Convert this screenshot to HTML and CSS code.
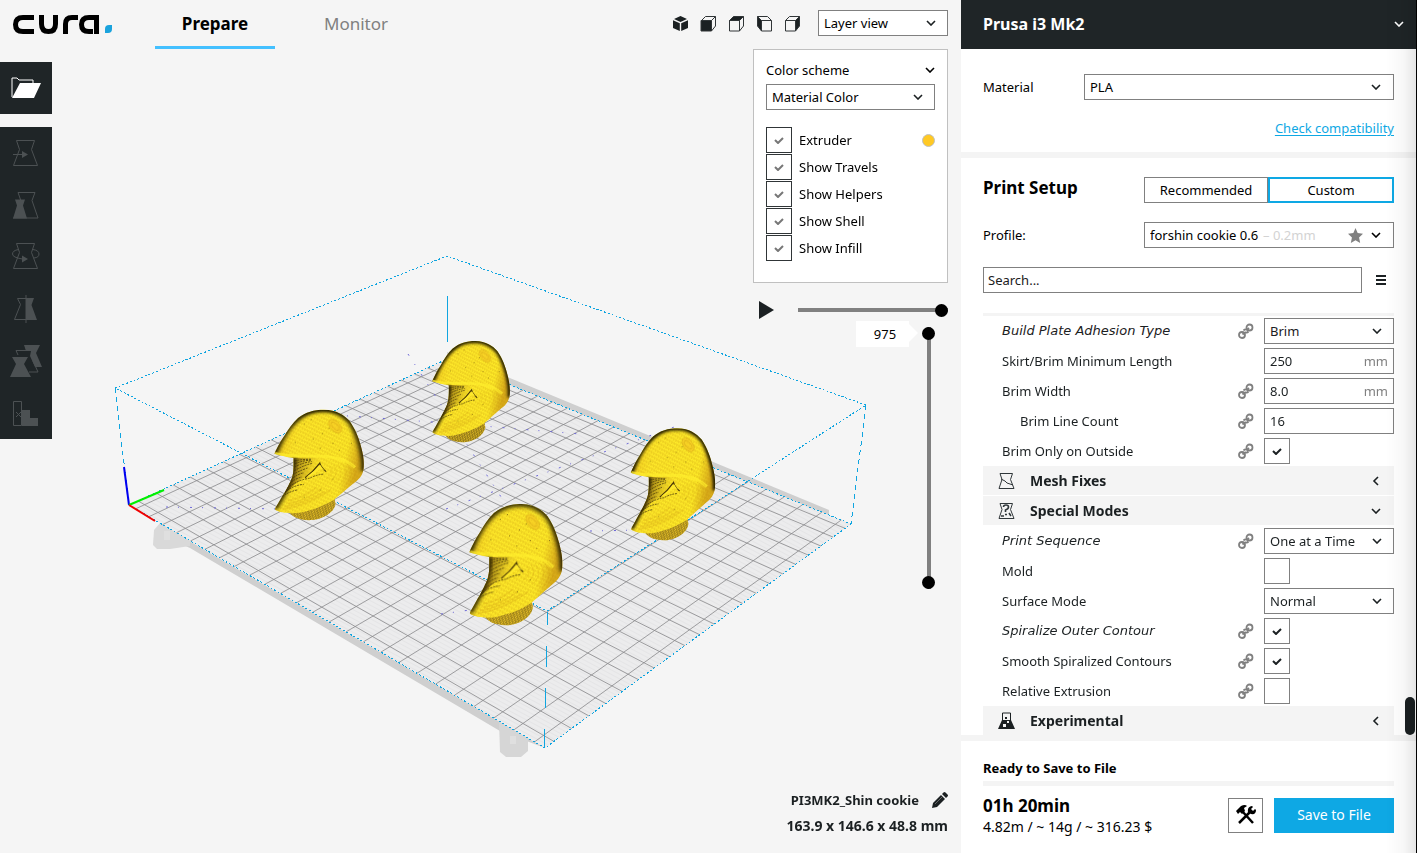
FILE: index.html
```html
<!DOCTYPE html>
<html lang="en">
<head>
    <meta charset="UTF-8">
    <meta name="viewport" content="width=device-width, initial-scale=1.0">
    <title>Cura</title>
    <link rel="stylesheet" href="styles.css">
</head>
<body>
    <!-- Shared icons -->
    <svg class="sprite" aria-hidden="true">
        <symbol id="link" viewBox="0 0 16 16">
            <g fill="none" stroke="#808080" stroke-width="1.800">
                <circle cx="4" cy="12" r="3"/>
                <circle cx="11.500" cy="4.500" r="3"/>
                <path d="M4.500 11.500l2-2M9 7l2-2M5.500 7.500q2-2 3.500-.5M7 9q1.500 1.500 3.500-.5"/>
            </g>
        </symbol>
        <symbol id="down" viewBox="0 0 10 6"><path d="M1 1l4 4 4-4" fill="none" stroke="currentColor" stroke-width="1.600"/></symbol>
        <symbol id="left" viewBox="0 0 6 10"><path d="M5 1l-4 4 4 4" fill="none" stroke="currentColor" stroke-width="1.600"/></symbol>
    </svg>

    <main class="viewport">
        <svg class="scene" viewBox="0 0 961 853" preserveAspectRatio="xMinYMin meet">
            <defs>
                <linearGradient id="skin" x1="0" y1="0" x2="1" y2="0.250">
                    <stop offset="0" stop-color="#f0c81e"/>
                    <stop offset="0.300" stop-color="#ffea2a"/>
                    <stop offset="0.850" stop-color="#ffec28"/>
                    <stop offset="1" stop-color="#d8ac1a"/>
                </linearGradient>
                <linearGradient id="hollow" x1="0" y1="0" x2="1" y2="0.200">
                    <stop offset="0" stop-color="#2e2404"/>
                    <stop offset="0.300" stop-color="#8a6c10" stop-opacity="0.850"/>
                    <stop offset="1" stop-color="#ffdf28" stop-opacity="0"/>
                </linearGradient>
                <pattern id="layers" width="12" height="9" patternUnits="userSpaceOnUse" patternTransform="rotate(-62)">
                    <path d="M0 2h9M3 6.500h8" stroke="#c08a08" stroke-width="2.500" opacity="0.400"/>
                </pattern>
                <pattern id="rings" width="9" height="7" patternUnits="userSpaceOnUse" patternTransform="rotate(-14)">
                    <path d="M0 2h6M3 5h6" stroke="#33290a" stroke-width="2"/>
                </pattern>
                <pattern id="mesh" width="4" height="4" patternUnits="userSpaceOnUse" patternTransform="rotate(28)">
                    <path d="M0 0h4" stroke="#dedee0" stroke-width="1"/>
                </pattern>
                <filter id="soft" x="-20%" y="-20%" width="140%" height="140%"><feGaussianBlur stdDeviation="6"/></filter>
                <path id="outline" d="M148 217C160 190 168 176 180 157C192 136 205 115 222 99C246 80 272 72 303 72C342 73 366 89 383 109C402 137 412 165 420 198C426 222 429 241 427 266C424 289 413 302 398 313C378 330 355 352 333 370C300 390 262 405 225 412C200 415 165 413 150 402C149 396 154 391 160 380C174 354 188 332 198 309C207 291 209 274 208 231C185 228 164 222 148 217Z"/>
                <clipPath id="inside"><use href="#outline"/></clipPath>
                <g id="cookie">
                    <path d="M190 402C200 425 225 437 262 436C300 434 336 410 339 382L335 360Z" fill="#e9c126"/>
                    <path d="M190 402C200 425 225 437 262 436C300 434 336 410 339 382L335 360Z" fill="url(#rings)" opacity="0.800"/>
                    <use href="#outline" fill="url(#skin)"/>
                    <g clip-path="url(#inside)">
                        <use href="#outline" fill="url(#layers)"/>
                        <path d="M203 231C240 231 275 228 300 231C290 240 282 250 270 270C250 295 225 300 180 350Z" fill="url(#hollow)"/>
                        <path d="M148 217C165 175 185 130 222 99C246 78 272 70 303 70C342 71 366 87 385 109C412 150 432 220 428 275" fill="none" stroke="#241b02" stroke-width="18" filter="url(#soft)"/>
                        <path d="M207 232C207 290 188 330 148 398" fill="none" stroke="#2b2104" stroke-width="18" filter="url(#soft)"/>
                        <path d="M150 216C185 229 260 222 310 226Q370 232 400 262" fill="none" stroke="#ffee2c" stroke-width="10" opacity="0.700"/>
                        <g fill="none" stroke="#40320a" stroke-width="3" stroke-dasharray="6 3" opacity="0.850">
                            <path d="M212 240q25-5 54-5M212 250q28-12 50-11M211 261q28-16 54-18M210 273q34-20 56-24M205 286q32-18 48-22"/>
                            <path d="M200 302q20-18 40-22M193 316q22-18 40-22M188 330q36-28 70-32q20-12 46-14M180 344q30-24 60-26M172 358q26-18 50-22"/>
                        </g>
                        <path d="M244 296q26-20 46-48q4 16 20 28" fill="none" stroke="#4a3808" stroke-width="4"/>
                        <path d="M248 294q24-18 44-40q4 10 14 18q-12-10-22 0q-14 16-36 22z" fill="#ffe92c"/>
                        <g fill="none" stroke="#c78f12" stroke-width="2" opacity="0.600">
                            <ellipse cx="338" cy="126" rx="15" ry="26" transform="rotate(-40 338 126)" fill="#f5c624"/>
                            <ellipse cx="338" cy="126" rx="8" ry="17" transform="rotate(-40 338 126)"/>
                            <path d="M322 260q14 22-12 40M334 256q18 28-10 50M346 252q24 32-10 62M358 248q30 36-8 72M370 246q36 36-2 76M382 246q36 34 0 66" stroke-dasharray="4 2"/>
                            <path d="M175 400q75-10 150-65M180 392q60-10 125-50M190 382q60-10 105-50M190 372q50-10 90-45"/>
                        </g>
                        <path d="M240 118h2M262 104h2M298 150h2M330 182h2M268 168h2M212 180h2M350 205h2M388 182h2M330 300h2M292 336h2M240 360h2M318 132h2M290 198h2" stroke="#5c470a" stroke-width="3"/>
                    </g>
                </g>
            </defs>

            <!-- Printer frame under the plate -->
            <g fill="#cfcfcf">
                <path d="M160 524L545 748L500 731L190 548L160 535Z"/>
                <path d="M447 352L829 510V515L824 518L447 366Z"/>
                <path d="M154 530L160 523H172L190 540V546L170 549H157L153 545Z" fill="#d9d9d9"/>
                <path d="M499 722L528 738V751L521 757H506L500 752Z" fill="#d6d6d6"/>
            </g>
            <path d="M164 531h6v9h-6zM510 736h6v8h-6z" fill="#dfdfdf"/>

            <path d="M129 505L545 748L851 524L447 359Z" fill="#ececed"/>
            <path d="M129 505L545 748L851 524L447 359Z" fill="url(#mesh)"/>
            <g id="grid" class="grid"></g>

            <g class="volume">
                <path d="M129 505L545 748L851 524L447 359Z" stroke-dasharray="2 2"/>
                <path d="M115 388L447 256L866 405L547 611Z" stroke-dasharray="2 2"/>
                <path d="M115 388L129 505M866 405L851 524" stroke-dasharray="5 4"/>
                <path d="M547 612V625M546 646V667M545 688V708M544 729V748M447 296V342"/>
            </g>
            <g class="travel">
                <path d="M408 354L505 503" stroke-dasharray="1 4"/>
                <path d="M335 415L446 423L580 434"/>
                <path d="M446 509L525 480L680 425"/>
                <path d="M166 507L280 509M441 614L470 610M590 531L640 530" stroke-dasharray="4 33"/>
            </g>
            <g fill="none" stroke-width="2">
                <path d="M129 505L124 467" stroke="#0000f0"/>
                <path d="M129 505L164 490" stroke="#00f000"/>
                <path d="M129 505L155 521" stroke="#f00000"/>
            </g>

            <use href="#cookie" transform="translate(391 321) scale(0.278)"/>
            <use href="#cookie" transform="translate(227 388) scale(0.320 0.303)"/>
            <use href="#cookie" transform="translate(586 406) scale(0.302 0.308)"/>
            <use href="#cookie" transform="translate(420 480) scale(0.333)"/>
        </svg>

        <header class="topbar">
            <svg class="logo" viewBox="0 0 100 22" role="img" aria-label="cura">
                <g fill="none" stroke="#000" stroke-width="5">
                    <path d="M21 3.500H10Q2.500 3.500 2.500 10.500T10 17.500H21"/>
                    <path d="M28.500 1V10Q28.500 17.500 35.500 17.500T42.500 10V1"/>
                    <path d="M52.500 20V10Q52.500 3.500 59 3.500H65"/>
                    <path d="M83.500 20V3.500H76Q68.500 3.500 68.500 10.500T76 17.500H80"/>
                </g>
                <path d="M92 19V15Q92 11 96 11H99V15Q99 19 95 19Z" fill="#1aa3dd"/>
            </svg>
            <nav class="tabs">
                <a href="#prepare" class="tab active">Prepare</a>
                <a href="#monitor" class="tab">Monitor</a>
            </nav>
            <div class="views">
                <button aria-label="3D view">
                    <svg viewBox="0 0 17 17"><path d="M8.500 1L15 4 8.500 7 2 4zM1 5.300l6.800 3V16L1 13zM16 5.300l-6.800 3V16L16 13z" fill="#1b2022"/></svg>
                </button>
                <button aria-label="Front view">
                    <svg viewBox="0 0 17 17" fill="none" stroke="#303537"><path d="M1.500 5.500l4-4h10v9.500l-4 5M11.500 5.500l4-4"/><path d="M1 5.500h10.500V16H1z" fill="#1b2022"/></svg>
                </button>
                <button aria-label="Top view">
                    <svg viewBox="0 0 17 17" fill="none" stroke="#303537"><path d="M1.500 5.500h10V16h-10zM11.500 16l4-5V1.500"/><path d="M1.500 5.500l4-4h10l-4 4z" fill="#1b2022"/></svg>
                </button>
                <button aria-label="Left view">
                    <svg viewBox="0 0 17 17" fill="none" stroke="#303537"><path d="M5.500 5.500h10V16h-10zM1.500 1.500h10l4 4"/><path d="M1.500 1.500l4 4V16l-4-5z" fill="#1b2022"/></svg>
                </button>
                <button aria-label="Right view">
                    <svg viewBox="0 0 17 17" fill="none" stroke="#303537"><path d="M1.500 5.500h10V16h-10zM1.500 5.500l4-4h10"/><path d="M11.500 5.500l4-4V11l-4 5z" fill="#1b2022"/></svg>
                </button>
            </div>
            <select class="combo view-mode" aria-label="View mode"><option>Layer view</option></select>
        </header>

        <div class="workspace">
            <div class="toolbar">
                <button class="open" aria-label="Open file">
                    <svg viewBox="0 0 30 22"><path d="M1 20V1h5l2 2h14v4" fill="none" stroke="#fff"/><path d="M9 6h21l-7 15H1z" fill="#fff"/></svg>
                </button>
                <div class="tools">
                    <button aria-label="Move">
                        <svg viewBox="0 0 30 30"><path d="M5.500 2.500h18l-3 9 6 16h-24l6-16zM2 16.500h9" class="line"/><path d="M11 13l6 3.500-6 3.500z"/></svg>
                    </button>
                    <button aria-label="Scale">
                        <svg viewBox="0 0 30 30"><path d="M10 11l-3-8.500h17l-3 8 6 17.500H2" class="line"/><path d="M4 9.500h10l-2 6 4 13H2l4-13z"/></svg>
                    </button>
                    <button aria-label="Rotate">
                        <svg viewBox="0 0 30 30"><path d="M5.500 1.500h18l-3 9 6 16h-24l6-16zM7.500 7.500q-6 1-6 4.500t10 5M22 7.500q6 1 6 4.500t-5 4" class="line"/><path d="M11 13.500l6 3.500-6 3.500z"/></svg>
                    </button>
                    <button aria-label="Mirror">
                        <svg viewBox="0 0 30 30"><path d="M15 4.500H6.500l3 6-6 15H15M15 1v28" class="line"/><path d="M15 4h8l-2.500 7L26 26H15z"/></svg>
                    </button>
                    <button class="wide" aria-label="Per model settings">
                        <svg viewBox="0 0 34 34"><path d="M9 11l-2-4.500h15M24 17l5 11h-9" class="line"/><path d="M15 1h16l-4 8 6 14h-7l-5-11 1-5h-5zM3 13h16l-4 7 7 13H1l6-13z"/></svg>
                    </button>
                    <button aria-label="Support blocker">
                        <svg viewBox="0 0 30 30"><path d="M2.500 3.500h8v24h-8z" class="line"/><path d="M5 14l5 5M10 14l-5 5" class="line"/><path d="M11 12h8v8h8v8H11z"/></svg>
                    </button>
                </div>
            </div>

            <div class="side">
                <section class="layer-panel">
                    <div class="panel-title">Color scheme <svg class="chevron"><use href="#down"/></svg></div>
                    <select class="combo" aria-label="Color scheme"><option>Material Color</option></select>
                    <div class="checks">
                        <label><input type="checkbox" class="check pale" checked>Extruder<i class="swatch"></i></label>
                        <label><input type="checkbox" class="check pale" checked>Show Travels</label>
                        <label><input type="checkbox" class="check pale" checked>Show Helpers</label>
                        <label><input type="checkbox" class="check pale" checked>Show Shell</label>
                        <label><input type="checkbox" class="check pale" checked>Show Infill</label>
                    </div>
                </section>
                <div class="playback">
                    <button aria-label="Play"><svg viewBox="0 0 15 18"><path d="M0 0l15 9-15 9z" fill="#1b2022"/></svg></button>
                    <input type="range" class="slider" aria-label="Path" value="100">
                </div>
                <div class="layers">
                    <output class="layer-tag" for="layer-top">975</output>
                    <div class="layer-range">
                        <input type="range" class="slider vertical" id="layer-top" aria-label="Top layer" max="975" value="975">
                        <input type="range" class="slider vertical bottom" aria-label="Bottom layer" max="975" value="0">
                    </div>
                </div>
                <div class="job">
                    <p>PI3MK2_Shin cookie
                        <button aria-label="Rename job"><svg viewBox="0 0 16 16"><path d="M0 16l1-5 8-8 4 4-8 8zM10 2l1.500-1.500q1-1 2 0l2 2q1 1 0 2L14 6z" fill="#1b2022"/><path d="M3 12l7-7" stroke="#888" stroke-width="0.700"/></svg></button>
                    </p>
                    <p class="size">163.9 x 146.6 x 48.8 mm</p>
                </div>
            </div>
        </div>
    </main>

    <aside class="sidebar">
        <button class="machine">Prusa i3 Mk2 <svg class="chevron"><use href="#down"/></svg></button>

        <section class="material">
            <div class="line-row">
                <label for="material">Material</label>
                <select class="combo" id="material"><option>PLA</option></select>
            </div>
            <a href="#compatibility">Check compatibility</a>
        </section>

        <section class="setup">
            <div class="line-row">
                <h2>Print Setup</h2>
                <div class="modes">
                    <button>Recommended</button>
                    <button class="selected">Custom</button>
                </div>
            </div>
            <div class="line-row">
                <label for="profile">Profile:</label>
                <div class="profile">
                    <select id="profile"><option>forshin cookie 0.6</option></select>
                    <span>– 0.2mm</span>
                    <svg class="star" viewBox="0 0 16 16"><path d="M8 0l2.300 5.300L16 6l-4.200 4 1.200 6-5-3-5 3 1.200-6L0 6l5.700-.7z" fill="#808080"/></svg>
                    <svg class="chevron"><use href="#down"/></svg>
                </div>
            </div>
            <div class="search-row">
                <input type="text" placeholder="Search..." aria-label="Search settings">
                <button aria-label="Setting visibility"><svg viewBox="0 0 10 10"><path d="M0 1h10M0 5h10M0 9h10" stroke="#1b2022" stroke-width="2"/></svg></button>
            </div>
        </section>

        <section class="settings">
            <div class="setting changed">
                <label for="adhesion">Build Plate Adhesion Type</label><svg class="linked"><use href="#link"/></svg>
                <select class="combo" id="adhesion"><option>Brim</option></select>
            </div>
            <div class="setting">
                <label for="skirt">Skirt/Brim Minimum Length</label>
                <div class="field"><input type="text" id="skirt" value="250"><span>mm</span></div>
            </div>
            <div class="setting">
                <label for="brim-width">Brim Width</label><svg class="linked"><use href="#link"/></svg>
                <div class="field"><input type="text" id="brim-width" value="8.0"><span>mm</span></div>
            </div>
            <div class="setting child">
                <label for="brim-lines">Brim Line Count</label><svg class="linked"><use href="#link"/></svg>
                <div class="field"><input type="text" id="brim-lines" value="16"></div>
            </div>
            <div class="setting">
                <label for="brim-outside">Brim Only on Outside</label><svg class="linked"><use href="#link"/></svg>
                <div class="cell"><input type="checkbox" class="check" id="brim-outside" checked></div>
            </div>
            <button class="category">
                <svg viewBox="0 0 17 17" fill="none" stroke="#30373a"><path d="M2 1.500h12.500l-2 6 3.500 9H1l3-9zM3 7l4 2 2 2 6 2"/></svg>
                Mesh Fixes <svg class="chevron side-arrow"><use href="#left"/></svg>
            </button>
            <button class="category">
                <svg viewBox="0 0 17 17" fill="none" stroke="#30373a"><path d="M2 1.500h12.500l-2 6 3.500 9H1l3-9z"/><path d="M5.500 5q0-2 2.500-2t2.500 2-3 3v2M7 12.500h2M3 14h3M11 11l2 3" stroke-width="1.600"/></svg>
                Special Modes <svg class="chevron"><use href="#down"/></svg>
            </button>
            <div class="setting changed">
                <label for="sequence">Print Sequence</label><svg class="linked"><use href="#link"/></svg>
                <select class="combo" id="sequence"><option>One at a Time</option></select>
            </div>
            <div class="setting">
                <label for="mold">Mold</label>
                <div class="cell"><input type="checkbox" class="check" id="mold"></div>
            </div>
            <div class="setting">
                <label for="surface">Surface Mode</label>
                <select class="combo" id="surface"><option>Normal</option></select>
            </div>
            <div class="setting changed">
                <label for="spiralize">Spiralize Outer Contour</label><svg class="linked"><use href="#link"/></svg>
                <div class="cell"><input type="checkbox" class="check" id="spiralize" checked></div>
            </div>
            <div class="setting">
                <label for="smooth">Smooth Spiralized Contours</label><svg class="linked"><use href="#link"/></svg>
                <div class="cell"><input type="checkbox" class="check" id="smooth" checked></div>
            </div>
            <div class="setting">
                <label for="relative">Relative Extrusion</label><svg class="linked"><use href="#link"/></svg>
                <div class="cell"><input type="checkbox" class="check" id="relative"></div>
            </div>
            <button class="category">
                <svg viewBox="0 0 17 17"><path d="M4.500 1h8v8M4.500 1v8" fill="none" stroke="#1b2022"/><path d="M4 8h9l4 9H0zM7 5h2v2H7z" fill="#1b2022"/><path d="M9 9h2v2H9zM5 12h3v3H5z" fill="#f4f4f4"/></svg>
                Experimental <svg class="chevron side-arrow"><use href="#left"/></svg>
            </button>
            <i class="scroll-thumb"></i>
        </section>

        <footer class="save">
            <p class="status">Ready to Save to File</p>
            <div class="progress"></div>
            <div class="save-row">
                <div class="estimate">
                    <strong>01h 20min</strong>
                    <span>4.82m / ~ 14g / ~ 316.23 $</span>
                </div>
                <button class="tool-button" aria-label="Print settings">
                    <svg viewBox="0 0 20 20"><path d="M6 6l11 12M3 18L14 7" stroke="#000" stroke-width="2.500"/><path d="M0 6l5-5q4-2 6 0L8 3l1 3-3 3-2-2-2 2zM12 7q-1-5 4-6l1 1-2 2 2 2 2-2 1 1q0 5-5 4z"/></svg>
                </button>
                <button class="save-button">Save to File</button>
            </div>
        </footer>
    </aside>

    <script src="script.js"></script>
</body>
</html>
```
FILE: styles.css
```css
* {
    margin: 0;
    padding: 0;
    box-sizing: border-box;
}

:root {
    --dark: #1f2527;
    --ink: #1b2022;
    --grey: #f4f4f4;
    --border: #808080;
    --blue: #0ea8e4;
}

body {
    display: grid;
    grid-template-columns: 1fr 456px;
    min-height: 100vh;
    background: #f5f5f5;
    color: #000;
    font: 13px/18px "Noto Sans", "Open Sans", sans-serif;
}

button,
input,
select {
    font: inherit;
    color: inherit;
    background: none;
    border: none;
    border-radius: 0;
}

button {
    cursor: pointer;
}

svg {
    display: block;
    flex: none;
}

.sprite {
    position: absolute;
    width: 0;
    height: 0;
}

.chevron {
    width: 10px;
    height: 6px;
}

.side-arrow {
    width: 10px;
    height: 10px;
}

.combo {
    appearance: none;
    width: 100%;
    height: 26px;
    padding: 0 24px 0 5px;
    border: 1px solid var(--border);
    background: #fff url("data:image/svg+xml,%3Csvg xmlns='http://www.w3.org/2000/svg' width='10' height='6'%3E%3Cpath d='M1 1l4 4 4-4' fill='none' stroke='%231b2022' stroke-width='1.600'/%3E%3C/svg%3E") no-repeat right 11px center;
}

.check {
    appearance: none;
    flex: none;
    width: 26px;
    height: 26px;
    border: 1px solid var(--border);
    background: #fff center no-repeat;
}

.check:checked {
    background-image: url("data:image/svg+xml,%3Csvg xmlns='http://www.w3.org/2000/svg' width='10' height='8'%3E%3Cpath d='M1 4l3 3 5-5' fill='none' stroke='%231b2022' stroke-width='2'/%3E%3C/svg%3E");
}

.check.pale {
    border-color: #303537;
}

.check.pale:checked {
    background-image: url("data:image/svg+xml,%3Csvg xmlns='http://www.w3.org/2000/svg' width='10' height='8'%3E%3Cpath d='M1 4l3 3 5-5' fill='none' stroke='%23777777' stroke-width='2'/%3E%3C/svg%3E");
}

/* Viewport */
.viewport {
    position: relative;
    display: flex;
    flex-direction: column;
}

/* 3D canvas behind the controls */
.scene {
    position: absolute;
    top: 0;
    left: 0;
    width: 100%;
}

.grid path {
    fill: none;
    stroke: #88888b;
    stroke-width: 1;
    opacity: 0.800;
}

.volume path {
    fill: none;
    stroke: #10a5e0;
    shape-rendering: crispEdges;
}

.travel path {
    fill: none;
    stroke: #6c68d8;
    stroke-dasharray: 2 10 1 11;
}

.topbar {
    position: relative;
    display: flex;
    align-items: center;
    height: 49px;
    padding: 0 13px;
}

.logo {
    width: 100px;
    height: 22px;
    margin-right: 42px;
}

.tabs {
    display: flex;
    gap: 21px;
    height: 49px;
}

.tab {
    width: 120px;
    padding-top: 12px;
    text-align: center;
    font-size: 17px;
    line-height: 24px;
    color: #808080;
    text-decoration: none;
}

.tab.active {
    color: #000;
    font-weight: bold;
    border-bottom: 3px solid #44c0ff;
}

.views {
    display: flex;
    gap: 11px;
    margin: 0 17px 0 auto;
}

.views svg {
    width: 17px;
    height: 17px;
}

.topbar .views,
.topbar .view-mode {
    margin-bottom: 3px;
}

.view-mode {
    width: 130px;
}

.workspace {
    position: relative;
    display: flex;
    flex: 1;
    justify-content: space-between;
    padding-right: 13px;
}

.toolbar {
    display: flex;
    flex-direction: column;
    gap: 13px;
    width: 52px;
    padding-top: 13px;
}

.toolbar button {
    display: grid;
    place-items: center;
    width: 52px;
    height: 52px;
    background: var(--dark);
}

.open svg {
    width: 30px;
    height: 22px;
}

.tools svg {
    width: 30px;
    height: 30px;
    fill: #4c5153;
}

.tools .wide svg {
    width: 34px;
    height: 34px;
}

.tools .line {
    fill: none;
    stroke: #4c5153;
}

.side {
    display: flex;
    flex-direction: column;
    width: 195px;
}

.layer-panel {
    height: 234px;
    padding: 11px 12px;
    background: #fff;
    border: 1px solid #c0c0c0;
}

.panel-title {
    display: flex;
    align-items: center;
    justify-content: space-between;
    margin-bottom: 5px;
}

.checks {
    display: grid;
    gap: 1px;
    margin-top: 17px;
}

.checks label {
    display: flex;
    align-items: center;
    gap: 7px;
}

.swatch {
    width: 13px;
    height: 13px;
    margin-left: auto;
    border: 1px solid #c0c0c0;
    border-radius: 50%;
    background: #ffc924;
}

.playback {
    display: flex;
    align-items: center;
    justify-content: space-between;
    height: 38px;
    padding: 16px 0 0 6px;
}

.playback svg {
    width: 15px;
    height: 18px;
}

.slider {
    appearance: none;
    width: 150px;
    height: 13px;
    background: linear-gradient(#808080, #808080) center / 100% 4px no-repeat;
}

.slider::-webkit-slider-thumb {
    appearance: none;
    width: 13px;
    height: 13px;
    border-radius: 50%;
    background: #000;
}

.layers {
    display: flex;
    justify-content: flex-end;
    gap: 13px;
    padding: 6px 13px 0 0;
}

.layer-tag {
    position: relative;
    width: 53px;
    height: 26px;
    margin-top: -6px;
    padding-left: 5px;
    line-height: 26px;
    text-align: center;
    background: #fff;
}

.layer-tag::after {
    content: "";
    position: absolute;
    left: 100%;
    top: 3px;
    border: 9px solid transparent;
    border-left-color: #fff;
    border-right: none;
}

.layer-range {
    display: grid;
}

.slider.vertical {
    grid-area: 1 / 1;
    writing-mode: vertical-lr;
    direction: rtl;
    width: 13px;
    height: 262px;
    background: linear-gradient(#808080, #808080) center / 4px 100% no-repeat;
}

.slider.vertical.bottom {
    background: none;
}

.job {
    margin-top: auto;
    padding-bottom: 14px;
    white-space: nowrap;
    font-weight: bold;
    line-height: 26px;
    color: var(--ink);
}

.job p {
    display: flex;
    align-items: center;
    justify-content: flex-end;
    gap: 13px;
}

.job .size {
    font-size: 14px;
}

.job svg {
    width: 16px;
    height: 16px;
}

/* Sidebar */
.sidebar {
    position: relative;
    display: flex;
    flex-direction: column;
    background: #fff;
    border-right: 1px solid #000;
}

.sidebar::after {
    content: "";
    position: absolute;
    inset: 0 0 0 auto;
    width: 30px;
    background: linear-gradient(to right, transparent, rgba(0, 0, 0, 0.030) 60%, rgba(0, 0, 0, 0.100));
    pointer-events: none;
}

.machine {
    display: flex;
    align-items: center;
    justify-content: space-between;
    height: 49px;
    padding: 0 12px 2px 22px;
    background: var(--dark);
    color: #fff;
    font-size: 16px;
    font-weight: bold;
}

.material {
    display: flex;
    flex-direction: column;
    align-items: flex-end;
    gap: 19px;
    height: 109px;
    padding: 25px 22px 0;
    border-bottom: 6px solid var(--grey);
}

.material a {
    color: var(--blue);
    text-underline-offset: 2px;
}

.line-row {
    display: flex;
    align-items: center;
    justify-content: space-between;
    width: 100%;
    height: 26px;
}

#material {
    width: 310px;
    background-position: right 12px center;
}

.setup {
    display: grid;
    gap: 19px;
    padding: 19px 22px 20px;
}

.setup h2 {
    align-self: flex-start;
    font-size: 17px;
    line-height: 22px;
}

.modes,
.profile {
    display: flex;
    width: 250px;
    height: 26px;
}

.modes button {
    flex: 1;
    border: 1px solid var(--border);
}

.modes .selected {
    border: 2px solid var(--blue);
}

.profile {
    align-items: center;
    padding: 0 12px 0 5px;
    border: 1px solid var(--border);
}

.profile select {
    appearance: none;
}

.profile span {
    margin-left: 4px;
    color: #d3d3d3;
}

.star {
    width: 15px;
    height: 15px;
    margin: 0 8px 0 auto;
}

.search-row {
    display: flex;
}

.search-row input {
    flex: 1;
    height: 26px;
    padding: 0 4px;
    border: 1px solid var(--border);
}

.search-row input::placeholder {
    color: #1b2022;
}

.search-row button {
    width: 32px;
    padding: 0 8px 0 14px;
}

.search-row svg {
    width: 10px;
    height: 10px;
}

.settings {
    position: relative;
    display: grid;
    grid-auto-rows: 29px;
    gap: 1px;
    margin: 0 22px;
    border-top: 3px solid var(--grey);
}

.setting {
    display: grid;
    grid-template-columns: 1fr 26px 130px;
    align-items: center;
    padding: 1px 0 0 19px;
    color: var(--ink);
}

.setting > :last-child {
    grid-column: 3;
}

.setting.child {
    padding-left: 37px;
}

.setting.changed label {
    font-family: "DejaVu Sans", sans-serif;
    font-style: italic;
}

.cell {
    display: flex;
}

.linked {
    width: 16px;
    height: 16px;
}

.field {
    display: flex;
    align-items: center;
    height: 26px;
    padding: 0 5px;
    border: 1px solid var(--border);
}

.field input {
    flex: 1;
    min-width: 0;
}

.field span {
    color: #808080;
}

.category {
    display: flex;
    align-items: center;
    padding: 0 13px 0 15px;
    background: var(--grey);
    color: var(--ink);
    font-size: 14px;
    font-weight: bold;
}

.category > :first-child {
    width: 17px;
    height: 17px;
    margin-right: 15px;
}

.category .chevron {
    margin-left: auto;
}

.scroll-thumb {
    position: absolute;
    right: -21px;
    bottom: 0;
    width: 10px;
    height: 38px;
    border-radius: 5px;
    background: var(--ink);
}

.save {
    flex: 1;
    padding: 18px 22px 0;
    border-top: 6px solid var(--grey);
}

.status {
    font-weight: bold;
}

.progress {
    height: 5px;
    margin: 4px 0 8px;
    background: var(--grey);
}

.save-row {
    display: flex;
    align-items: center;
}

.estimate {
    display: grid;
    margin-right: auto;
    font-size: 14px;
    line-height: 19px;
}

.estimate strong {
    font-size: 17px;
    line-height: 23px;
}

.tool-button {
    display: grid;
    place-items: center;
    width: 35px;
    height: 35px;
    margin-right: 11px;
    border: 1px solid var(--border);
}

.tool-button svg {
    width: 20px;
    height: 20px;
}

.save-button {
    width: 120px;
    height: 35px;
    background: var(--blue);
    color: #fff;
    font-size: 14px;
}
```
FILE: script.js
```javascript
// Corners of the build plate on screen: origin, x end, far corner, y end
var plate = [[129, 505], [545, 748], [851, 524], [447, 359]];
var plateWidth = 250;
var plateDepth = 210;

function project(u, v) {
    var a = plate[0], b = plate[1], c = plate[2], d = plate[3];
    var dx1 = b[0] - c[0], dx2 = d[0] - c[0], dx3 = a[0] - b[0] + c[0] - d[0];
    var dy1 = b[1] - c[1], dy2 = d[1] - c[1], dy3 = a[1] - b[1] + c[1] - d[1];
    var det = dx1 * dy2 - dx2 * dy1;
    var g = (dx3 * dy2 - dx2 * dy3) / det;
    var h = (dx1 * dy3 - dx3 * dy1) / det;
    var w = g * u + h * v + 1;
    return [
        ((b[0] - a[0] + g * b[0]) * u + (d[0] - a[0] + h * d[0]) * v + a[0]) / w,
        ((b[1] - a[1] + g * b[1]) * u + (d[1] - a[1] + h * d[1]) * v + a[1]) / w
    ];
}

function drawGrid() {
    var path = "";
    for (var x = 5; x < plateWidth; x += 10) {
        path += "M" + project(x / plateWidth, 0) + "L" + project(x / plateWidth, 1);
    }
    for (var y = 5; y < plateDepth; y += 10) {
        path += "M" + project(0, y / plateDepth) + "L" + project(1, y / plateDepth);
    }
    var line = document.createElementNS("http://www.w3.org/2000/svg", "path");
    line.setAttribute("d", path);
    document.getElementById("grid").appendChild(line);
}

drawGrid();
```
